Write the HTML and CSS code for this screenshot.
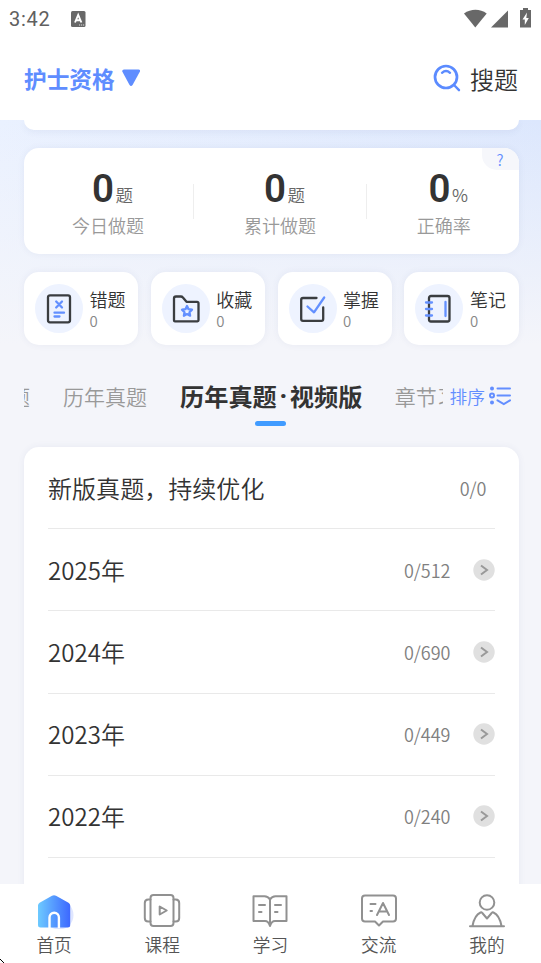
FILE: index.html
```html
<!DOCTYPE html>
<html lang="zh-CN">
<head>
<meta charset="utf-8">
<title>护士资格</title>
<link rel="stylesheet" href="styles.css">
</head>
<body>
<header class="header">
  <div class="status">
    <span class="clock">3:42</span>
    <svg class="status-app" width="15" height="16" viewBox="0 0 15 16"><rect width="14.5" height="16" rx="1.5" fill="#686868"/><path d="M4 11.5 7.2 4l3.2 7.500M5.200 9.300h4" fill="none" stroke="#fff" stroke-width="1.9"/><path d="M8 14h5.500" stroke="#ddd" stroke-dasharray="1.200 .8"/></svg>
    <div class="status-icons">
      <svg width="24" height="20" viewBox="0 0 24 20"><path d="M0 4.500C7-.5 16-.5 22.700 4.500L11.300 18.500Z" fill="#686868"/></svg>
      <svg width="18" height="18" viewBox="0 0 18 18"><path d="M0 17.500 17 .5v17Z" fill="#686868"/></svg>
      <svg class="battery" width="12" height="20" viewBox="0 0 12 20"><path d="M3 0h5v2h3v17.500H0V2h3Z" fill="#686868"/><path d="M7 4.500 2.500 11.500h2.300V17l4-7H6.300Z" fill="#fff"/></svg>
    </div>
  </div>
  <div class="titlebar">
    <h1>护士资格</h1>
    <svg class="caret" width="18" height="18" viewBox="0 0 18 18"><path d="M2 .5h14.500q2.400.3 1.300 2.300L10.700 15.700q-1.700 2.400-3.300 0L.4 2.800Q-.3.8 2 .5Z" fill="#5f8dff"/></svg>
    <div class="search">
      <svg width="28" height="28" viewBox="0 0 28 28" fill="none" stroke="#5b8bff" stroke-width="2.700" stroke-linecap="round"><circle cx="13" cy="13" r="11"/><path d="m21.500 21.500 4.500 4.700M9 8.800q4-3.600 8 0" stroke-width="2.400"/></svg>
      <span>搜题</span>
    </div>
  </div>
</header>

<main class="content">
  <div class="banner-end"></div>
  <section class="card stats">
    <div class="stat"><p><b>0</b><i>题</i></p><span>今日做题</span></div>
    <div class="stat"><p><b>0</b><i>题</i></p><span>累计做题</span></div>
    <div class="stat"><p><b>0</b><i>%</i></p><span>正确率</span></div>
    <div class="help">?</div>
  </section>

  <section class="tiles">
    <div class="card tile">
      <div class="tile-icon"><svg width="32" height="32" viewBox="0 0 32 32"><rect x="5" y="2.300" width="22" height="27" rx="2" class="ink"/><path d="m13.200 8.500 5.800 6m0-6-5.800 6M11.500 19.700h9.500M11.500 23.500h5" class="accent"/></svg></div>
      <div><h2>错题</h2><span>0</span></div>
    </div>
    <div class="card tile">
      <div class="tile-icon"><svg width="32" height="32" viewBox="0 0 32 32"><path d="M4 27.500V5.500q0-2 2-2h4.800q1.300 0 2.100 1l3.600 4.300h10.500q1.500 0 1.500 1.500v17q0 1-1 1H5q-1 0-1-.8Z" class="ink"/><path d="m17 13 1.500 3.200 3.500.5-2.500 2.500.6 3.500-3.100-1.600-3.100 1.600.6-3.500-2.500-2.500 3.500-.5Z" class="accent"/></svg></div>
      <div><h2>收藏</h2><span>0</span></div>
    </div>
    <div class="card tile">
      <div class="tile-icon"><svg width="32" height="32" viewBox="0 0 32 32"><path d="M19.500 5H6q-1.800 0-1.800 1.800V26q0 1.800 1.800 1.800h18.500q1.700 0 1.700-1.800V14.500" class="ink"/><path d="m10.500 13.500 6.500 5.800L27.200 4.500" class="accent"/></svg></div>
      <div><h2>掌握</h2><span>0</span></div>
    </div>
    <div class="card tile">
      <div class="tile-icon"><svg width="32" height="32" viewBox="0 0 32 32"><rect x="6" y="3" width="20.500" height="25.500" rx="2" class="ink"/><path d="M3 9.500h6M3 16h6M3 22.500h6M22.500 9v14" class="accent"/></svg></div>
      <div><h2>笔记</h2><span>0</span></div>
    </div>
  </section>

  <nav class="tabs">
    <div class="tab-strip">
      <span class="tab cut">题</span>
      <span class="tab second">历年真题</span>
      <span class="tab active">历年真题<em>·</em>视频版</span>
      <span class="tab last">章节习</span>
    </div>
    <div class="sort">
      <span>排序</span>
      <svg width="22" height="20" viewBox="0 0 22 20" fill="none" stroke="#638eff" stroke-width="2" stroke-linecap="round"><circle cx="3" cy="2.500" r="1"/><circle cx="3" cy="9.500" r="2"/><circle cx="3" cy="16.500" r="1"/><path d="M8.500 2.500H21M8.500 9.500H21M8.500 14.300l6.300 3.700L21 14.300"/></svg>
    </div>
  </nav>

  <ul class="card list">
    <li><span>新版真题，持续优化</span><small class="alone">0/0</small></li>
    <li><span>2025年</span><small>0/512</small><svg class="go" viewBox="0 0 22 22"><circle cx="11" cy="11" r="10.700"/><path d="m8 6.500 6 4.500-6 4.500"/></svg></li>
    <li><span>2024年</span><small>0/690</small><svg class="go" viewBox="0 0 22 22"><circle cx="11" cy="11" r="10.700"/><path d="m8 6.500 6 4.500-6 4.500"/></svg></li>
    <li><span>2023年</span><small>0/449</small><svg class="go" viewBox="0 0 22 22"><circle cx="11" cy="11" r="10.700"/><path d="m8 6.500 6 4.500-6 4.500"/></svg></li>
    <li><span>2022年</span><small>0/240</small><svg class="go" viewBox="0 0 22 22"><circle cx="11" cy="11" r="10.700"/><path d="m8 6.500 6 4.500-6 4.500"/></svg></li>
    <li></li>
  </ul>
</main>

<nav class="bottom">
  <a><svg width="40" height="38" viewBox="0 0 40 38"><defs><linearGradient id="home" x1="0" x2="1"><stop offset="0" stop-color="#6dcaff"/><stop offset="1" stop-color="#3d68ff"/></linearGradient></defs><circle cx="25" cy="24" r="14.500" fill="#dfe6ff"/><path d="M4 14.500q0-1.800 1.600-2.700L18 4.800q2-1.200 4 0l12.500 7q1.700 1 1.700 2.700V34q0 2.500-2.500 2.500H6.500Q4 36.500 4 34Z" fill="url(#home)"/><path d="M15.500 37V26.500a4.700 4.700 0 0 1 9.400 0V37" fill="none" stroke="#fff" stroke-width="2.400"/></svg><span>首页</span></a>
  <a><svg width="40" height="38" viewBox="0 0 40 38" class="line"><rect x="8.500" y="4" width="23" height="31" rx="3"/><path d="M8.500 8.500H6.200q-3.400 0-3.400 3.500v15q0 3.500 3.400 3.500h2.300M31.500 8.500h2.300q3.400 0 3.400 3.500v15q0 3.500-3.400 3.500h-2.300M17.700 15.500v8l7-4Z"/></svg><span>课程</span></a>
  <a><svg width="40" height="38" viewBox="0 0 40 38" class="line"><path d="M20 8.500q-2-3.200-5.500-3.200H3.500V30H15q3.500 0 5 5 1.500-5 5-5h11.500V5.300h-11Q22 5.300 20 8.500V34M9 14h6M9 21h2.500M25 14h6M25 21h2.500"/></svg><span>学习</span></a>
  <a><svg width="40" height="38" viewBox="0 0 40 38" class="line"><path d="M6 4.500h28q3 0 3 3v20q0 3-3 3H24l-4 4-4-4H6q-3 0-3-3v-20q0-3 3-3ZM11.500 13h5M11.500 20h1.500M18 24l6-12 6 12M20 20.500h8"/></svg><span>交流</span></a>
  <a><svg width="40" height="38" viewBox="0 0 40 38" class="line"><circle cx="20" cy="11.500" r="7.300"/><path d="M3 35.200h34M5.500 35C7 27 9 23.500 13.500 21.500q1-.5 1.800.5l4.700 5.500 4.700-5.500q.8-1 1.800-.5C31 23.500 33 27 34.500 35"/></svg><span>我的</span></a>
  <svg class="corner" width="4" height="4" viewBox="0 0 4 4"><path d="M0 .5h1M1 1.500h1M2 2.500h1M3 3.500h1" stroke="#000"/></svg>
</nav>
</body>
</html>
```
FILE: styles.css
```css
* { box-sizing: border-box; margin: 0; padding: 0; }

body {
  width: 541px;
  height: 963px;
  overflow: hidden;
  display: flex;
  flex-direction: column;
  font-family: "Noto Sans CJK SC", sans-serif;
  font-weight: 350;
  color: #333;
  background: #fff;
}

i, em { font-style: normal; }

.header { height: 120px; flex: none; }

.status {
  height: 38px;
  display: flex;
  align-items: center;
  padding: 0 9px;
}
.clock { width: 62px; font: 400 20px/38px Roboto, sans-serif; color: #606060; letter-spacing: .7px; }
.status-app { margin-top: -1px; }
.status-icons { margin-left: auto; margin-top: -1px; display: flex; align-items: center; gap: 3px; }
.battery { margin-left: 8px; margin-top: -2px; }

.titlebar {
  height: 80px;
  display: flex;
  align-items: center;
  padding: 0 23px 0 24px;
}
.titlebar h1 { font-size: 22.700px; font-weight: 700; color: #5f8dff; }
.caret { margin-left: 7px; }
.search { margin-left: auto; display: flex; align-items: center; gap: 9.500px; font-size: 24px; }

.content {
  flex: 1;
  min-height: 0;
  overflow: hidden;
  padding: 0 22.500px 0 24px;
  background:
    linear-gradient(180deg, transparent 0, #f4f5fa 225px),
    linear-gradient(90deg, #eaf1ff 0, #dce7fd 100%);
}

.card { background: #fff; border-radius: 15px; box-shadow: 0 0 7px rgba(70, 90, 140, .07); }

.banner-end {
  height: 10px;
  background: #fff;
  border-radius: 0 0 14px 14px;
  box-shadow: 0 2px 7px rgba(70, 90, 140, .07);
}

.stats {
  position: relative;
  height: 106px;
  margin-top: 18px;
  display: grid;
  grid-template-columns: 169px 173px 1fr;
  align-items: center;
}
.stat { height: 35px; display: flex; flex-direction: column; align-items: center; justify-content: center; }
.stat:first-child { padding-right: 1px; }
.stat + .stat { border-left: 1px solid #eee; }
.stat:nth-child(3) { padding-left: 2px; }
.stat p { flex: none; display: flex; align-items: baseline; gap: 1.500px; height: 38px; margin: 6px 0 4px; line-height: 44px; padding-left: 9px; }
.stat b { font-family: Roboto, sans-serif; font-size: 38.500px; font-weight: 600; }
.stat i { font-size: 17.500px; color: #666; }
.stat span { flex: none; font-size: 18px; line-height: 32px; color: #999; }
.help {
  position: absolute;
  top: 0;
  right: 0;
  width: 37px;
  height: 22px;
  border-radius: 0 15px 0 15px;
  background: #f6f7fb;
  color: #638eff;
  font-size: 15px;
  line-height: 23px;
  text-align: center;
}

.tiles { display: grid; grid-template-columns: repeat(4, 1fr); gap: 12.700px; margin-top: 18px; }
.tile { height: 73px; display: flex; align-items: center; gap: 6.500px; padding-left: 11px; }
.tile-icon {
  width: 48px;
  height: 49px;
  border-radius: 50%;
  background: #eef3ff;
  display: grid;
  place-items: center;
}
.tile h2 { font-size: 18px; font-weight: 350; line-height: 24px; }
.tile span { display: block; font-size: 15px; line-height: 19px; color: #888; }
.ink, .accent { fill: none; stroke-width: 2.300; stroke-linecap: round; stroke-linejoin: round; }
.ink { stroke: #3a3d40; }
.accent { stroke: #6390ff; }

.tabs { height: 102px; display: flex; padding-top: 29px; line-height: 44px; }
.tab-strip { flex: none; width: 419px; height: 60px; overflow: hidden; display: flex; white-space: nowrap; }
.tab { flex: none; font-size: 21px; color: #999; }
.cut { width: 6px; direction: rtl; overflow: hidden; }
.second { margin-left: 33px; }
.active {
  margin-left: 33px;
  font-size: 24.200px;
  font-weight: 700;
  line-height: 43px;
  color: #333;
  display: flex;
  position: relative;
}
.active em { width: 13px; font-family: Roboto, sans-serif; font-weight: 900; line-height: 45px; text-align: center; }
.active::after {
  content: "";
  position: absolute;
  left: 75px;
  top: 47px;
  width: 31px;
  height: 5px;
  border-radius: 3px;
  background: #409bff;
}
.last { margin-left: 32.500px; }
.sort { margin-left: 6.500px; display: flex; align-items: center; height: 44px; gap: 4px; font-size: 17.700px; color: #638eff; white-space: nowrap; }
.sort span { line-height: 44px; height: 44px; }

.list { list-style: none; padding: 0 24px; height: 530px; }
.list li {
  height: 82.200px;
  display: flex;
  align-items: center;
  border-bottom: 1px solid #e9e9e9;
  font-size: 24px;
}
.list span { margin-top: -1px; letter-spacing: .05px; }
.list small { margin-left: auto; font-size: 18px; color: #808080; }
.list .alone { margin-right: 8px; }
.go { width: 22px; height: 22px; margin-left: 22px; flex: none; }
.go circle { fill: #e0e0e0; }
.go path { fill: none; stroke: #999; stroke-width: 2; }

.bottom {
  position: relative;
  flex: none;
  height: 79px;
  display: grid;
  grid-template-columns: repeat(5, 1fr);
  background: #fff;
}
.bottom a { display: flex; flex-direction: column; align-items: center; padding-top: 7px; }
.bottom span { font-size: 17.700px; line-height: 31px; color: #555; }
.line { fill: none; stroke: #919191; stroke-width: 2; stroke-linecap: round; stroke-linejoin: round; }
.corner { position: absolute; left: 0; bottom: 0; }
```
